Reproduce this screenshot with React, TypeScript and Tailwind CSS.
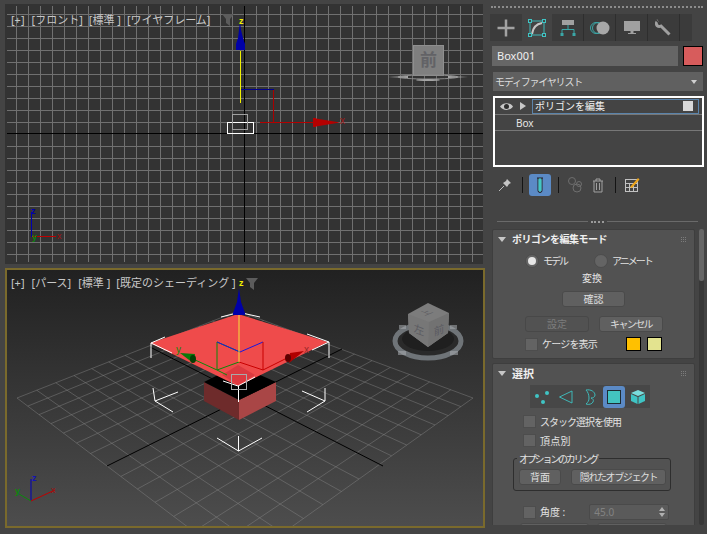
import React from "react";

type P = [number, number];
function homography(a: P, b: P, c: P, d: P) {
  const dx1 = b[0] - c[0], dx2 = d[0] - c[0], sx = a[0] - b[0] + c[0] - d[0];
  const dy1 = b[1] - c[1], dy2 = d[1] - c[1], sy = a[1] - b[1] + c[1] - d[1];
  const den = dx1 * dy2 - dx2 * dy1;
  const g = (sx * dy2 - dx2 * sy) / den;
  const h = (dx1 * sy - sx * dy1) / den;
  const A = b[0] - a[0] + g * b[0], B = d[0] - a[0] + h * d[0], C = a[0];
  const D = b[1] - a[1] + g * b[1], E = d[1] - a[1] + h * d[1], F = a[1];
  return (u: number, v: number): P => {
    const w = g * u + h * v + 1;
    return [(A * u + B * v + C) / w, (D * u + E * v + F) / w];
  };
}

function range(n: number) {
  return Array.from({ length: n }, (_, i) => i);
}

function Funnel({ x, y }: { x: number; y: number }) {
  return <path d={`M${x - 6} ${y - 5}h12l-4 5v7l-4-3v-4z`} fill="#5c5c5c" />;
}

function TopScene() {
  const xs = range(40).map((i) => 244 + (i - 20) * 12).filter((x) => x >= 7 && x !== 244);
  const ys = [...range(10).map((i) => 122 - i * 12), ...range(10).map((i) => 146 + i * 12)];
  return (
    <svg className="absolute inset-0" width="478" height="260" viewBox="5 4 478 260">
      <g stroke="#707070" strokeWidth="1" shapeRendering="crispEdges">
        {xs.map((x) => <line key={x} x1={x + 0.5} x2={x + 0.5} y1="6" y2="262" />)}
        {ys.map((y) => <line key={y} x1="7" x2="483" y1={y + 0.5} y2={y + 0.5} />)}
      </g>
      <g shapeRendering="crispEdges" fill="none">
        <line x1="7" x2="483" y1="133.5" y2="133.5" stroke="#000" />
        <line x1="244.5" x2="244.5" y1="6" y2="262" stroke="#000" />
        <path d="M241 89.5H273.5V122" stroke="#00008c" />
        <path d="M273.5 90V122" stroke="#a80000" />
        <line x1="260" x2="330" y1="122.5" y2="122.5" stroke="#b40000" />
        <line x1="240.5" x2="240.5" y1="51" y2="103" stroke="#f0f000" strokeWidth="1" />
        <rect x="227.5" y="122.5" width="26" height="11" stroke="#fff" />
        <rect x="232.5" y="114.5" width="15" height="15" stroke="#a0a0a0" />
      </g>
      <path d="M240 22L241 30L243 38L245 44V50H236V44L238 38L239 30Z" fill="#0000a8" />
      <path d="M313 118L340 122.5L313 127Z" fill="#b40000" />
      <rect x="313" y="118" width="3" height="9" fill="#b40000" />
      <text x="239" y="24" fontSize="9" fontWeight="700" fill="#f0f000" fontFamily="Liberation Sans">z</text>
      <text x="340" y="124" fontSize="10" fill="#a01818" fontFamily="Liberation Sans">x</text>
      <Funnel x={228} y={19} />
      <rect x="413.5" y="45.5" width="30" height="30" fill="#7f7f7f" stroke="#8f8f8f" />
      <text x="428.5" y="66" textAnchor="middle" fontSize="17" fontWeight="700" fill="#626266" fontFamily="Noto Sans CJK JP">前</text>
      <ellipse cx="428" cy="77" rx="30" ry="2" fill="none" stroke="#8a8a8a" strokeWidth="1" />
      <path d="M388 77L408 76L408 78ZM468 77L448 76L448 78Z" fill="#a8a8a8" />
      <ellipse cx="428" cy="80" rx="12" ry="1" fill="#a5a5a5" />
      <g shapeRendering="crispEdges">
        <line x1="31.5" x2="31.5" y1="212" y2="237" stroke="#0000b0" />
        <line x1="32" x2="56" y1="236.5" y2="236.5" stroke="#c00000" />
      </g>
      <text x="31" y="214" fontSize="9" fill="#0000b0" fontFamily="Liberation Sans" fontWeight="700">z</text>
      <text x="32" y="240" fontSize="9" fill="#0a8a0a" fontFamily="Liberation Sans" fontWeight="700">y</text>
      <text x="57" y="239" fontSize="9" fill="#a01010" fontFamily="Liberation Sans">x</text>
    </svg>
  );
}

function PerspScene() {
  const N = 14;
  const H = homography([17, 398], [238, 311], [473, 398], [238, 565]);
  const lines: { a: P; b: P; k: string }[] = [];
  for (let i = 0; i <= N; i++) {
    if (i === N / 2) continue;
    lines.push({ a: H(i / N, 0), b: H(i / N, 1), k: `u${i}` });
    lines.push({ a: H(0, i / N), b: H(1, i / N), k: `v${i}` });
  }
  const w = "#ffffff";
  return (
    <svg className="absolute inset-0" width="476" height="256" viewBox="7 270 476 256">
      <defs>
        <linearGradient id="vp" x1="0" y1="0" x2="0" y2="1">
          <stop offset="0" stopColor="#212121" />
          <stop offset="1" stopColor="#4d4d4d" />
        </linearGradient>
      </defs>
      <rect x="7" y="270" width="476" height="256" fill="url(#vp)" />
      <g stroke="#8c8c8c" strokeOpacity="0.42" strokeWidth="1">
        {lines.map((l) => <line key={l.k} x1={l.a[0]} y1={l.a[1]} x2={l.b[0]} y2={l.b[1]} />)}
      </g>
      <line x1="107" y1="466" x2="342" y2="349" stroke="#000" />
      <line x1="383" y1="466" x2="150" y2="347" stroke="#000" />
      <polygon points="204,382 239,400 239,420 204,401" fill="#6e2b2b" />
      <polygon points="276,382 239,400 239,420 276,401" fill="#a94646" />
      <polygon points="204,382 238,365 276,382 239,400" fill="#000" />
      <polygon points="238,314 328,342 238,386 150,343" fill="#ef4b4b" />
      <polygon points="238,365 255,375 238,385 222,375" fill="#dc3a40" />
      <g stroke={w} strokeWidth="1" fill="none">
        <path d="M221 317L237 313M242 313L260 317" />
        <path d="M151 358V343L165 337M151 343L172 353" />
        <path d="M329 358V342L307 334M329 342L312 350" />
        <path d="M223 381L238 386L255 377M238.5 386V402" />
        <path d="M153 388L155 401L178 392M155 401L173 412" />
        <path d="M325 388V401L302 391M325 401L307 412" />
        <path d="M238.5 436V451M217 438L238.5 451L262 438" />
      </g>
      <g fill="none" strokeWidth="1">
        <path d="M217 370V342L240 352" stroke="#0a8a0a" />
        <path d="M217 342L240 352L263 342" stroke="#1818e0" />
        <path d="M263 342V370" stroke="#c80000" />
        <path d="M239 362L263 370L287 358" stroke="#c80000" />
        <path d="M239 362L217 370L193 359M217 370L227 375" stroke="#0a8a0a" />
        <line x1="239" y1="315" x2="239" y2="362" stroke="#f5e23c" />
      </g>
      <path d="M239 288L241 302L245 313V315H233V313L237 302Z" fill="#0000a8" />
      <polygon points="180,353 195,354 193,363" fill="#0a7a0a" />
      <ellipse cx="193" cy="359" rx="3" ry="4" fill="#063f06" />
      <polygon points="304,351 290,353 289,363" fill="#b00000" />
      <ellipse cx="288" cy="358" rx="3" ry="4" fill="#5e0000" />
      <rect x="231.5" y="374.5" width="15" height="15" fill="none" stroke="#a9a9a9" />
      <text x="239" y="286" fontSize="9" fontWeight="700" fill="#f0f000" fontFamily="Liberation Sans">z</text>
      <text x="176" y="353" fontSize="10" fill="#0a8a0a" fontFamily="Liberation Sans">y</text>
      <text x="304" y="353" fontSize="10" fill="#9c2a2a" fontFamily="Liberation Sans">x</text>
      <Funnel x={252} y={283} />
      <ellipse cx="428" cy="341" rx="33" ry="17" fill="#2a2a2a" stroke="#6f7478" strokeWidth="5" />
      <ellipse cx="428" cy="339" rx="26" ry="12" fill="#1f1f1f" />
      <polygon points="428,303 449,313 448,333 428,347 409,333 408,314" fill="#7c7c7c" />
      <polygon points="408,314 429,322 428,347 409,333" fill="#777" />
      <polygon points="449,313 429,322 428,347 448,333" fill="#727272" />
      <text transform="matrix(.9 -.35 .9 .35 429 314)" fontSize="10" fill="#5c5c62" fontFamily="Noto Sans CJK JP" textAnchor="middle">上</text>
      <text transform="matrix(.95 .35 0 1 419 334)" fontSize="11" fill="#5c5c62" fontFamily="Noto Sans CJK JP" textAnchor="middle">左</text>
      <text transform="matrix(.95 -.35 0 1 439 334)" fontSize="11" fill="#5c5c62" fontFamily="Noto Sans CJK JP" textAnchor="middle">前</text>
      <g fill="#a8acb0" opacity="0.55">
        <rect x="399" y="325" width="7" height="4" />
        <rect x="450" y="325" width="7" height="4" />
        <rect x="398" y="351" width="8" height="4" />
        <rect x="450" y="351" width="8" height="4" />
      </g>
      <path d="M31 479V501" stroke="#0000b8" fill="none" />
      <path d="M31 501L55 490" stroke="#c00000" fill="none" />
      <path d="M31 501L19 494" stroke="#0a8a0a" fill="none" />
      <text x="32" y="481" fontSize="9" fontWeight="700" fill="#1414b4" fontFamily="Liberation Sans">z</text>
      <text x="15" y="494" fontSize="9" fontWeight="700" fill="#0a8a0a" fontFamily="Liberation Sans">y</text>
      <text x="51" y="493" fontSize="9" fill="#a01010" fontFamily="Liberation Sans">x</text>
    </svg>
  );
}

function Tab({ active, sep, children }: { active?: boolean; sep?: boolean; children: React.ReactNode }) {
  return (
    <div className={`${active ? "w-[30px] bg-[#444444]" : "w-[32px]"} h-full flex items-center justify-center ${sep ? "border-r border-[#2e2e2e]" : ""}`}>
      {children}
    </div>
  );
}

function Tabs() {
  return (
    <div className="mt-[6px] ml-[1px] w-[202px] h-[27px] bg-[#3b3b3b] flex">
      <Tab>
        <svg width="18" height="18" viewBox="0 0 18 18"><path d="M7.750 .5h2.500v17h-2.500zM.5 7.750h17v2.500H.5z" fill="#a2a2a2" /></svg>
      </Tab>
      <Tab active>
        <svg width="18" height="18" viewBox="0 0 18 18" fill="none">
          <rect x="2" y="2" width="14" height="14" stroke="#3fb8b8" strokeWidth="1" />
          <path d="M4 15C5 8 8 5 14 4" stroke="#c4c4c4" strokeWidth="2" />
          <g fill="#444" stroke="#3fc4c4"><rect x=".5" y=".5" width="3" height="3" /><rect x="14.500" y=".5" width="3" height="3" /><rect x=".5" y="14.500" width="3" height="3" /><rect x="14.500" y="14.500" width="3" height="3" /></g>
        </svg>
      </Tab>
      <Tab sep>
        <svg width="16" height="18" viewBox="0 0 16 18" fill="none">
          <rect x="2" y="1" width="12" height="5" fill="#a0a0a0" />
          <path d="M8 6v4M2 14v-3.500h12V14" stroke="#3ba7a7" />
          <rect x=".5" y="14" width="3" height="3" fill="#3ba7a7" /><rect x="12.500" y="14" width="3" height="3" fill="#3ba7a7" />
        </svg>
      </Tab>
      <Tab sep>
        <svg width="20" height="14" viewBox="0 0 20 14" fill="none">
          <circle cx="6" cy="7" r="5.500" stroke="#3ba7a7" />
          <circle cx="8" cy="7" r="5.500" stroke="#3ba7a7" />
          <circle cx="13" cy="7" r="6.500" fill="#a8a8a8" />
        </svg>
      </Tab>
      <Tab sep>
        <svg width="18" height="16" viewBox="0 0 18 16"><rect x="1" y="1" width="16" height="10" fill="#a0a0a0" /><path d="M7.500 11h3v2h-3zM5 13h8v1H5z" fill="#a0a0a0" /></svg>
      </Tab>
      <Tab sep>
        <svg width="18" height="17" viewBox="0 0 18 17" fill="none"><path d="M3 1.500A3.700 3.700 0 0 0 2 6.500 3.700 3.700 0 0 0 6 7L14.500 15.500" stroke="#a0a0a0" strokeWidth="3" /><path d="M1 1L5 5" stroke="#3b3b3b" strokeWidth="1.500" /></svg>
      </Tab>
    </div>
  );
}

function Sep() {
  return <div className="w-px h-[16px] bg-[#141414]" />;
}

function ToolBar() {
  return (
    <div className="mt-[7px] h-[22px] flex items-center">
      <div className="w-[30px] flex justify-center ml-[1px]">
        <svg width="14" height="14" viewBox="0 0 14 14"><path d="M1 13L6 8" stroke="#bdbdbd" /><path d="M9 1l4 4-2 1-2 3-4-4 3-2z" fill="#c4c4c4" /></svg>
      </div>
      <div className="ml-[2px]"><Sep /></div>
      <div className="ml-[6px] w-[22px] h-[22px] rounded-[3px] bg-[#5b8ac5] flex items-center justify-center">
        <svg width="10" height="16" viewBox="0 0 10 16" fill="none"><path d="M2 1h6M3 1v12.500a2 2 0 0 0 4 0V1" stroke="#222" /><rect x="3.500" y="1.500" width="3" height="13" rx="1.400" fill="#42c8c0" /></svg>
      </div>
      <div className="ml-[7px]"><Sep /></div>
      <div className="ml-[8px] w-[18px] flex justify-center">
        <svg width="18" height="16" viewBox="0 0 18 16" fill="none" stroke="#6e6e6e"><circle cx="5" cy="4" r="3.500" /><circle cx="12" cy="7" r="2.500" /><circle cx="10" cy="11" r="4" /></svg>
      </div>
      <div className="ml-[6px] w-[14px] flex justify-center">
        <svg width="12" height="15" viewBox="0 0 12 15" fill="none" stroke="#a0a0a0"><path d="M1 3h10M4 3V1h4v2M2 3v11h8V3M4.500 5v7M7.500 5v7" /></svg>
      </div>
      <div className="ml-[10px]"><Sep /></div>
      <div className="ml-[8px] w-[16px] flex justify-center">
        <svg width="16" height="16" viewBox="0 0 16 16" fill="none"><rect x="1.500" y="2.500" width="12" height="12" stroke="#c2c2c2" /><path d="M1.500 6.500h12M1.500 10.500h12M5.500 6.500v8M9.500 6.500v8" stroke="#c2c2c2" /><path d="M6 10L14 1l1.500 1.500L8 11z" fill="#eda51a" /></svg>
      </div>
    </div>
  );
}

function Dots({ className }: { className?: string }) {
  return (
    <div className={`grid grid-cols-3 gap-[1px] w-[5px] ${className ?? ""}`}>
      {range(9).map((i) => <div key={i} className="w-px h-px bg-[#7c7c7c]" />)}
    </div>
  );
}

function RollHead({ title, tight }: { title: string; tight?: boolean }) {
  return (
    <div className="h-[18px] shrink-0 flex items-center">
      <div className="ml-[5px] w-0 h-0 border-l-[4px] border-r-[4px] border-t-[5px] border-l-transparent border-r-transparent border-t-[#c6c6c6]" />
      <div className={`ml-[6px] font-bold text-[#efefef] leading-none ${tight ? "text-[10px] tracking-[-0.5px]" : "text-[11px]"}`}>{title}</div>
      <Dots className="ml-auto mr-[8px]" />
    </div>
  );
}

function Btn({ w, disabled, children, className }: { w: string; disabled?: boolean; children: React.ReactNode; className?: string }) {
  return (
    <div className={`${w} h-[16px] shrink-0 rounded-[3px] border flex items-center justify-center text-[10px] leading-none ${disabled ? "bg-[#525252] border-[#484848] text-[#7c7c7c]" : "bg-[#606060] border-[#4a4a4a] text-[#dedede]"} ${className ?? ""}`}>
      {children}
    </div>
  );
}

function Check({ children, className, textClass }: { children: React.ReactNode; className?: string; textClass?: string }) {
  return (
    <div className={`flex items-center h-[13px] shrink-0 ${className ?? ""}`}>
      <div className="w-[13px] h-[13px] bg-[#636363] border border-[#4d4d4d]" />
      <div className={`ml-[4px] text-[10px] leading-none text-[#e2e2e2] whitespace-nowrap ${textClass ?? ""}`}>{children}</div>
    </div>
  );
}

function Radio({ on, children, className }: { on?: boolean; children: React.ReactNode; className?: string }) {
  return (
    <div className={`flex items-center ${className ?? ""}`}>
      <div className="w-[14px] h-[14px] rounded-full bg-[#646464] border border-[#4c4c4c] flex items-center justify-center">
        {on && <div className="w-[8px] h-[8px] rounded-full bg-[#e6e6e6]" />}
      </div>
      <div className="ml-[4px] text-[10px] tracking-[-2px] leading-none text-[#e2e2e2] whitespace-nowrap">{children}</div>
    </div>
  );
}

function SubIcons() {
  return (
    <div className="mt-[3px] ml-[37px] w-[120px] h-[23px] shrink-0 bg-[#474747] flex items-center">
      <div className="w-[24px] flex justify-center">
        <svg width="16" height="16" viewBox="0 0 16 16" fill="#3fc4c4"><circle cx="3" cy="7" r="2" /><circle cx="13" cy="4" r="2" /><circle cx="9" cy="13" r="2" /></svg>
      </div>
      <div className="w-[24px] flex justify-center">
        <svg width="16" height="16" viewBox="0 0 16 16" fill="none" stroke="#3fb8b8"><path d="M1.500 8L14 2v12z" /></svg>
      </div>
      <div className="w-[24px] flex justify-center">
        <svg width="14" height="16" viewBox="0 0 14 16" fill="none" stroke="#3fb8b8"><path d="M3 1c5-1 9 2 9 5 0 2-2 3-4 3 2 1 3 2 2 4-1 2-4 3-7 2 2-2 3-3 3-6 0-3-1-6-3-8z" /></svg>
      </div>
      <div className="w-[24px] flex justify-center">
        <div className="w-[22px] h-[22px] rounded-[3px] bg-[#5b8ac5] flex items-center justify-center">
          <div className="w-[14px] h-[14px] bg-[#43c4c0] border border-[#1e2c33]" />
        </div>
      </div>
      <div className="w-[24px] flex justify-center">
        <svg width="16" height="16" viewBox="0 0 16 16"><path d="M8 1l7 3-7 3-7-3z" fill="#7adcdc" /><path d="M1 5l6.500 3v7L1 12z" fill="#3fc4c4" /><path d="M15 5L8.500 8v7L15 12z" fill="#3fc4c4" /></svg>
      </div>
    </div>
  );
}

export default function App() {
  return (
    <div className="w-[707px] h-[534px] overflow-hidden bg-[#444444] flex [font-family:'Noto_Sans','Noto_Sans_CJK_JP',sans-serif]">
      <div className="w-[489px] shrink-0 pl-[5px] pt-[4px] flex flex-col">
        <div className="relative w-[478px] h-[260px] bg-[#333333] overflow-hidden">
          <TopScene />
          <div className="absolute top-[9px] left-[6px] flex text-[11px] leading-[14px] text-[#c8c8c8] whitespace-pre">
            <span>[+]</span><span className="ml-[7px]">[フロント]</span><span className="ml-[6px]">[標準 ]</span><span className="ml-[6px]">[ワイヤフレーム]</span>
          </div>
        </div>
        <div className="relative mt-[4px] w-[480px] h-[260px] border-2 border-[#7a6a2c] overflow-hidden">
          <PerspScene />
          <div className="absolute top-[6px] left-[4px] flex text-[11px] leading-[14px] text-[#c8c8c8] whitespace-pre">
            <span>[+]</span><span className="ml-[7px]">[パース]</span><span className="ml-[7px]">[標準 ]</span><span className="ml-[6px]">[既定のシェーディング ]</span>
          </div>
        </div>
      </div>

      <div className="w-[218px] shrink-0 flex flex-col">
        <div className="mt-[6px] ml-[2px] w-[212px] border-t-2 border-dotted border-[#8c8c8c]" />
        <Tabs />
        <div className="mt-[5px] ml-[3px] flex h-[20px]">
          <div className="w-[186px] bg-[#666666] text-[11px] leading-[20px] pl-[5px] text-[#efefef]">Box001</div>
          <div className="ml-[5px] w-[20px] bg-[#d75c5c] border border-black" />
        </div>
        <div className="mt-[6px] ml-[4px] w-[210px] h-[19px] bg-[#606060] flex items-center pl-[2px] pr-[6px]">
          <span className="text-[10px] tracking-[-1.2px] leading-none text-[#dcdcdc]">モディファイヤリスト</span>
          <div className="ml-auto w-0 h-0 border-l-[3px] border-r-[3px] border-t-[4px] border-l-transparent border-r-transparent border-t-[#d0d0d0]" />
        </div>
        <div className="mt-[5px] ml-[4px] w-[211px] h-[71px] border-2 border-white bg-[#444444] flex flex-col">
          <div className="h-[16px] flex items-center">
            <svg className="ml-[5px]" width="13" height="9" viewBox="0 0 13 9"><path d="M0 4.500C3 0 10 0 13 4.500 10 9 3 9 0 4.500z" fill="#c8c8c8" /><circle cx="6.500" cy="4.500" r="2.500" fill="#2e2e2e" /></svg>
            <div className="ml-[7px] w-0 h-0 border-t-[4px] border-b-[4px] border-l-[6px] border-t-transparent border-b-transparent border-l-[#c8c8c8]" />
            <div className="ml-[6px] w-[167px] h-[15px] border border-[#5b84ab] flex items-center pl-[2px]">
              <span className="text-[10px] leading-none text-[#f2f2f2]">ポリゴンを編集</span>
              <div className="ml-auto mr-[5px] w-[10px] h-[10px] bg-[#d8d8d8]" />
            </div>
          </div>
          <div className="h-[17px] border-y border-[#777777] flex items-center pl-[21px] text-[10px] leading-none text-[#e6e6e6]">Box</div>
        </div>
        <ToolBar />
        <div className="mt-[25px] ml-[8px] w-[201px] flex items-center h-px">
          <div className="w-[91px] h-px bg-[#6a6a6a]" />
          <div className="ml-[3px] w-[13px] border-t-2 border-dotted border-[#9a9a9a]" />
          <div className="ml-[3px] w-[91px] h-px bg-[#6a6a6a]" />
        </div>

        <div className="mt-[7px] ml-[3px] h-[296px] flex overflow-hidden">
          <div className="w-[203px] flex flex-col gap-[4px]">
            <div className="h-[130px] shrink-0 bg-[#525252] border border-[#3e3e3e] rounded-[2px] flex flex-col">
              <RollHead tight title="ポリゴンを編集モード" />
              <div className="mt-[6px] flex">
                <Radio on className="ml-[32px] w-[69px]">モデル</Radio>
                <Radio>アニメート</Radio>
              </div>
              <div className="mt-[4px] text-center text-[10px] leading-[12px] text-[#e6e6e6]"><span className="mr-[3px]">変換</span></div>
              <Btn w="w-[63px]" className="mt-[7px] ml-[69px]">確認</Btn>
              <div className="mt-[9px] ml-[32px] flex">
                <Btn w="w-[64px]" disabled>設定</Btn>
                <Btn w="w-[64px]" className="ml-[10px] tracking-[-1.6px]">キャンセル</Btn>
              </div>
              <div className="mt-[5px] ml-[32px] flex items-center">
                <Check textClass="tracking-[-0.8px]">ケージを表示</Check>
                <div className="ml-auto w-[15px] h-[14px] bg-[#ffc000] border border-black" />
                <div className="ml-[6px] mr-[32px] w-[15px] h-[14px] bg-[#e3e38f] border border-black" />
              </div>
            </div>
            <div className="shrink-0 pb-[10px] bg-[#525252] border border-[#3e3e3e] rounded-[2px] flex flex-col">
              <RollHead title="選択" />
              <SubIcons />
              <Check className="mt-[7px] ml-[30px]" textClass="tracking-[-1px]">スタック選択を使用</Check>
              <Check className="mt-[6px] ml-[30px]" textClass="tracking-[0.3px]">頂点別</Check>
              <div className="relative mt-[11px] ml-[20px] w-[158px] h-[33px] shrink-0 border border-[#2e2e2e] rounded-[3px] flex items-center pt-[5px] pl-[5px]">
                <div className="absolute -top-[6px] left-[3px] px-[2px] bg-[#525252] text-[10px] tracking-[-2.2px] leading-[12px] text-[#e2e2e2]">オプションのカリング</div>
                <Btn w="w-[42px]">背面</Btn>
                <Btn w="w-[95px]" className="ml-[10px] tracking-[-1.4px]">隠れたオブジェクト</Btn>
              </div>
              <div className="mt-[13px] ml-[30px] flex items-center shrink-0">
                <Check>角度 :</Check>
                <div className="ml-[24px] w-[80px] h-[16px] bg-[#5a5a5a] border border-[#4a4a4a] rounded-[2px] flex items-center pl-[4px] text-[10px] text-[#828282] leading-none">
                  45.0
                  <svg className="ml-auto mr-[3px]" width="6" height="10" viewBox="0 0 6 10" fill="#b0b0b0"><path d="M3 0l3 4H0zM3 10L0 6h6z" /></svg>
                </div>
              </div>
              <div className="mt-[3px] ml-[27px] flex shrink-0">
                <Btn w="w-[69px]"> </Btn>
                <Btn w="w-[70px]" className="ml-[8px]"> </Btn>
              </div>
            </div>
          </div>
          <div className="ml-[4px] w-[5px] h-full bg-[#383838] rounded-[2px]">
            <div className="w-full h-[52px] bg-[#666666] rounded-[2px]" />
          </div>
        </div>
      </div>
    </div>
  );
}
